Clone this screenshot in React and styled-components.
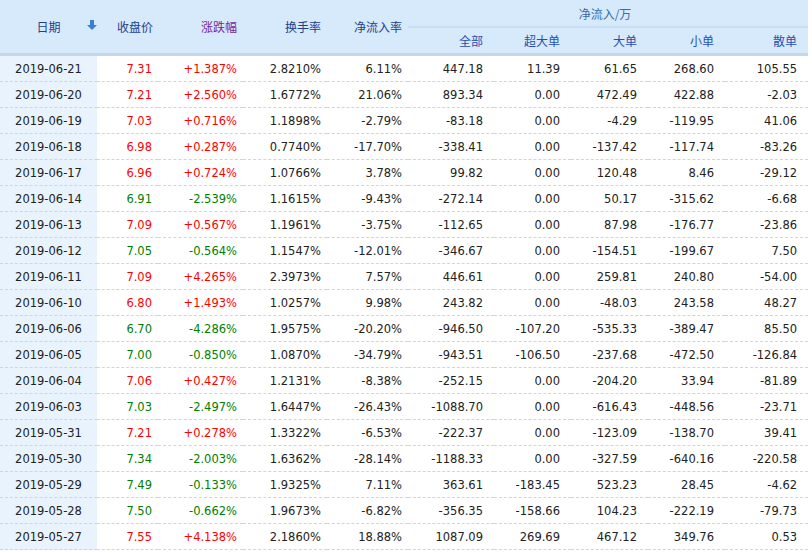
import React from "react";
import styled, { createGlobalStyle } from "styled-components";

const G = createGlobalStyle`
  body { margin: 0; background: #fff; font-family: "DejaVu Sans", "Noto Sans CJK SC", sans-serif; }
`;

const raw = `2019-06-21 7.31 +1.387% 2.8210% 6.11% 447.18 11.39 61.65 268.60 105.55
2019-06-20 7.21 +2.560% 1.6772% 21.06% 893.34 0.00 472.49 422.88 -2.03
2019-06-19 7.03 +0.716% 1.1898% -2.79% -83.18 0.00 -4.29 -119.95 41.06
2019-06-18 6.98 +0.287% 0.7740% -17.70% -338.41 0.00 -137.42 -117.74 -83.26
2019-06-17 6.96 +0.724% 1.0766% 3.78% 99.82 0.00 120.48 8.46 -29.12
2019-06-14 6.91 -2.539% 1.1615% -9.43% -272.14 0.00 50.17 -315.62 -6.68
2019-06-13 7.09 +0.567% 1.1961% -3.75% -112.65 0.00 87.98 -176.77 -23.86
2019-06-12 7.05 -0.564% 1.1547% -12.01% -346.67 0.00 -154.51 -199.67 7.50
2019-06-11 7.09 +4.265% 2.3973% 7.57% 446.61 0.00 259.81 240.80 -54.00
2019-06-10 6.80 +1.493% 1.0257% 9.98% 243.82 0.00 -48.03 243.58 48.27
2019-06-06 6.70 -4.286% 1.9575% -20.20% -946.50 -107.20 -535.33 -389.47 85.50
2019-06-05 7.00 -0.850% 1.0870% -34.79% -943.51 -106.50 -237.68 -472.50 -126.84
2019-06-04 7.06 +0.427% 1.2131% -8.38% -252.15 0.00 -204.20 33.94 -81.89
2019-06-03 7.03 -2.497% 1.6447% -26.43% -1088.70 0.00 -616.43 -448.56 -23.71
2019-05-31 7.21 +0.278% 1.3322% -6.53% -222.37 0.00 -123.09 -138.70 39.41
2019-05-30 7.34 -2.003% 1.6362% -28.14% -1188.33 0.00 -327.59 -640.16 -220.58
2019-05-29 7.49 -0.133% 1.9325% 7.11% 363.61 -183.45 523.23 28.45 -4.62
2019-05-28 7.50 -0.662% 1.9673% -6.82% -356.35 -158.66 104.23 -222.19 -79.73
2019-05-27 7.55 +4.138% 2.1860% 18.88% 1087.09 269.69 467.12 349.76 0.53`
  .split("\n").map((l) => l.split(" "));

const widths = [97, 61, 85, 84, 81, 86, 77, 77, 77, 83];

const Wrap = styled.div`width: 812px; height: 553px; overflow: hidden;`;
const Table = styled.table`
  border-collapse: collapse; table-layout: fixed; width: 808px;
  font-size: 11.5px; color: #222;
`;
const Th = styled.th`
  background: #d6eafb; font-weight: normal; text-align: ${(p) => p.$align || "right"};
  padding: 0 ${(p) => p.$pr ?? 6}px 0 ${(p) => p.$pl ?? 0}px; height: ${(p) => p.$h || 26}px;
  color: ${(p) => p.$c || "#1f3e8c"}; font-family: "Noto Sans CJK SC", sans-serif; font-size: 12px;
  border-bottom: ${(p) => (p.$bb ? "3px solid #c3d6ea" : "none")};
  ${(p) => p.$line && "border-bottom: 2px solid #c9def2;"}
  position: relative;
`;
const Td = styled.td`
  height: 25px; text-align: right; padding: 0 ${(p) => p.$pr ?? 11}px 0 0;
  border-bottom: 1px dashed #d4d4d4;
  color: ${(p) => p.$c || "#222"};
  background: ${(p) => (p.$date ? "#e8f3fd" : "#fff")};
  ${(p) => p.$date && "text-align: center; padding: 0;"}
`;
const Arrow = styled.span`
  position: absolute; left: 87px; top: 25px; width: 0; height: 0;
  border-left: 5px solid transparent; border-right: 5px solid transparent;
  border-top: 5px solid #3a7fd0;
  &::before { content: ""; position: absolute; left: -2px; top: -10px; width: 4px; height: 5px; background: #3a7fd0; }
`;

const col = (v) => (v.startsWith("+") ? "#ff0000" : v.startsWith("-") ? "#008000" : "#222");

export default function App() {
  return (
    <Wrap>
      <G />
      <Table>
        <colgroup>{widths.map((w, i) => <col key={i} style={{ width: w }} />)}</colgroup>
        <thead>
          <tr>
            <Th rowSpan={2} $bb $align="center" $pr={0}>日期<Arrow /></Th>
            <Th rowSpan={2} $bb $pr={5}>收盘价</Th>
            <Th rowSpan={2} $bb $c="#7a1fa0" $pr={6}>涨跌幅</Th>
            <Th rowSpan={2} $bb $pr={6}>换手率</Th>
            <Th rowSpan={2} $bb $pr={6}>净流入率</Th>
            <Th colSpan={5} $align="center" $c="#3a6aa8" $line $h={26}>净流入/万</Th>
          </tr>
          <tr>
            {["全部", "超大单", "大单", "小单", "散单"].map((t) => (
              <Th key={t} $bb $c="#2a4fb0" $pr={11} $h={25}>{t}</Th>
            ))}
          </tr>
        </thead>
        <tbody>
          {raw.map((r) => {
            const c = col(r[2]);
            return (
              <tr key={r[0]}>
                <Td $date>{r[0]}</Td>
                <Td $c={c} $pr={6}>{r[1]}</Td>
                <Td $c={c} $pr={6}>{r[2]}</Td>
                <Td $pr={6}>{r[3]}</Td>
                <Td $pr={6}>{r[4]}</Td>
                {r.slice(5).map((v, i) => <Td key={i}>{v}</Td>)}
              </tr>
            );
          })}
        </tbody>
      </Table>
    </Wrap>
  );
}
